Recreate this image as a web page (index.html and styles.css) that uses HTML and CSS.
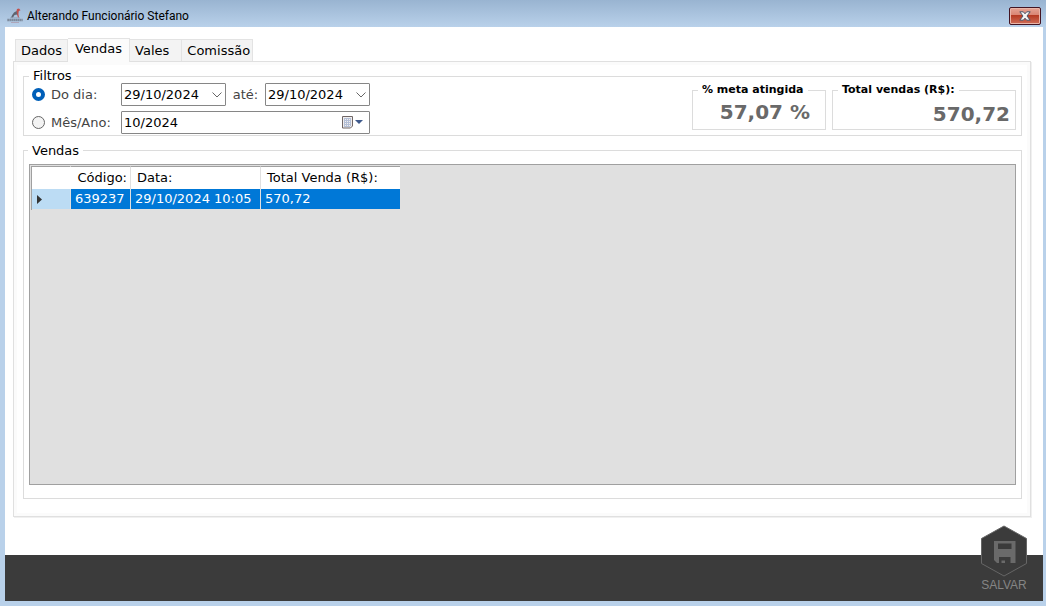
FILE: index.html
```
<!DOCTYPE html>
<html lang="pt-BR">
<head>
    <meta charset="UTF-8">
    <meta name="viewport" content="width=device-width, initial-scale=1.0">
    <title>Alterando Funcionário Stefano</title>
    <link rel="stylesheet" href="styles.css">
</head>
<body>
    <header class="titlebar">
        <svg class="app-icon" width="16" height="16" viewBox="0 0 16 16">
            <path d="M10 1 L12 0.5 L13.5 2.2 L11.8 3 L11.4 6 L12 9.5 H11 L10 6.5 L9.2 4 Z" fill="#c0504d"/>
            <path d="M9.6 3 L10.2 6.5 L7.5 7 L6 9.5 H4 L5.2 7 L7 4.5 Z" fill="#5f6470"/>
            <path d="M3 9.8 H13" stroke="#8a93a3" stroke-width="0.6"/>
            <path d="M0.5 12 H15.5" stroke="#68707e" stroke-width="2.4" stroke-dasharray="1.2 0.8"/>
            <path d="M4 14.5 H12" stroke="#a98c9a" stroke-width="0.6"/>
        </svg>
        <h1>Alterando Funcionário Stefano</h1>
        <button class="close" type="button" aria-label="Fechar">
            <svg width="12" height="10" viewBox="0 0 12 10">
                <path d="M0.8 0.8 H4.3 L6 2.8 L7.7 0.8 H11.2 L8 5 L11.2 9.2 H7.7 L6 7.2 L4.3 9.2 H0.8 L4 5 Z" fill="#f4f4f4" stroke="#4b5568" stroke-width="1"/>
            </svg>
        </button>
    </header>
    <main class="client">
        <nav class="tabs">
            <button type="button" class="tab">Dados</button>
            <button type="button" class="tab active">Vendas</button>
            <button type="button" class="tab vales">Vales</button>
            <button type="button" class="tab">Comissão</button>
        </nav>
        <div class="panel">
            <fieldset class="group filters">
                <legend>Filtros</legend>
                <div class="filters-body">
                    <div class="filter-grid">
                        <span class="choice">
                            <input type="radio" name="periodo" id="porDia" checked>
                            <label for="porDia">Do dia:</label>
                        </span>
                        <div class="dates">
                            <span class="picker">
                                <input type="text" id="dataInicio" aria-label="Data inicial" value="29/10/2024">
                                <svg width="10" height="6" viewBox="0 0 10 6"><path d="M0.5 0.5 L5 5 L9.5 0.5" fill="none" stroke="#666"/></svg>
                            </span>
                            <label for="dataFim">até:</label>
                            <span class="picker">
                                <input type="text" id="dataFim" value="29/10/2024">
                                <svg width="10" height="6" viewBox="0 0 10 6"><path d="M0.5 0.5 L5 5 L9.5 0.5" fill="none" stroke="#666"/></svg>
                            </span>
                        </div>
                        <span class="choice">
                            <input type="radio" name="periodo" id="porMes">
                            <label for="porMes">Mês/Ano:</label>
                        </span>
                        <span class="picker">
                            <input type="text" id="mesAno" aria-label="Mês/Ano" value="10/2024">
                            <svg width="21" height="13" viewBox="0 0 21 13">
                                <path d="M0.5 0.5 H10.5 V10 L8.5 12 H0.5 Z" fill="#f0eeee" stroke="#6f6666"/>
                                <path d="M2 2.5 H9 M2 4.5 H9 M2 6.5 H9 M2 8.5 H9 M2 10.5 H8" stroke="#b4bfd6"/>
                                <path d="M2 3.5 H9 M2 5.5 H9 M2 7.5 H9 M2 9.5 H9" stroke="#b4bfd6" stroke-dasharray="1 1"/>
                                <path d="M13 4 H21 L17 8 Z" fill="#3f5a8c"/>
                            </svg>
                        </span>
                    </div>
                    <div class="totals">
                        <fieldset class="group total goal">
                            <legend>% meta atingida</legend>
                            <output>57,07 %</output>
                        </fieldset>
                        <fieldset class="group total amount">
                            <legend>Total vendas (R$):</legend>
                            <output>570,72</output>
                        </fieldset>
                    </div>
                </div>
            </fieldset>
            <section class="group sales">
                <h2>Vendas</h2>
                <div class="grid-area">
                    <table>
                        <thead>
                            <tr>
                                <th class="marker"></th>
                                <th class="code">Código:</th>
                                <th class="date">Data:</th>
                                <th class="value">Total Venda (R$):</th>
                            </tr>
                        </thead>
                        <tbody>
                            <tr>
                                <td class="marker"><svg width="5" height="9" viewBox="0 0 5 9"><path d="M0 0 L5 4.5 L0 9 Z" fill="#333"/></svg></td>
                                <td class="code">639237</td>
                                <td>29/10/2024 10:05</td>
                                <td>570,72</td>
                            </tr>
                        </tbody>
                    </table>
                </div>
            </section>
        </div>
    </main>
    <footer class="bottombar">
        <button class="save" type="button">
            <svg width="48" height="52" viewBox="0 0 48 52">
                <path d="M24 1 L46.5 13.5 V38.5 L24 51 L1.5 38.5 V13.5 Z" fill="#3b3b3b" stroke="#666"/>
                <path fill-rule="evenodd" d="M14 16 H35.5 V38 H17 L14 35 Z M18 18.5 V24 H31.5 V18.5 Z M19 32 V38 H21.5 V35.5 H25 V38 H30.5 V32 Z" fill="#6a6a6a"/>
            </svg>
            <span>SALVAR</span>
        </button>
    </footer>
</body>
</html>
```
FILE: styles.css
```
* {
    box-sizing: border-box;
}
body {
    margin: 0;
    padding: 0 3px 5px 5px;
    min-height: 100vh;
    display: flex;
    flex-direction: column;
    font-family: "DejaVu Sans", Verdana, sans-serif;
    font-size: 13px;
    line-height: 16px;
    color: #000;
    background: #b9d1ea;
}
button, input {
    font: inherit;
    color: inherit;
}

/* title bar */
.titlebar {
    display: flex;
    align-items: center;
    gap: 4px;
    height: 27px;
    margin: 0 -3px 0 -5px;
    padding: 4px 5px 0 7px;
    background: linear-gradient(#99b4d1, #b9d1ea);
}
.titlebar h1 {
    flex: 1;
    margin: 0;
    font-family: Roboto, "Segoe UI", sans-serif;
    font-size: 12px;
    font-weight: normal;
}
.close {
    display: flex;
    align-items: center;
    justify-content: center;
    width: 32px;
    height: 18px;
    padding: 0;
    border: 1px solid #431422;
    border-radius: 2px;
    box-shadow: inset 0 0 0 1px #eab5a8;
    background: linear-gradient(#e5a394 0%, #d98472 45%, #b53a22 46%, #cf6d58 100%);
}

.client {
    flex: 1;
    display: flex;
    flex-direction: column;
    padding: 11px 12px 38px 8px;
    background: #fff;
}

/* tabs */
.tabs {
    display: flex;
    align-items: flex-end;
    height: 23px;
    padding-left: 2px;
}
.tab {
    height: 22px;
    padding: 0 6px;
    border: 1px solid #e3e3e3;
    border-width: 1px 1px 0 0;
    background: #f3f3f3;
    white-space: nowrap;
}
.tab:first-child {
    border-left-width: 1px;
    padding: 0 5px;
}
.tab.active {
    height: 24px;
    margin-bottom: -1px;
    padding: 0 7px 3px;
    background: #fbfbfb;
    z-index: 1;
}
.tab.vales {
    padding: 0 12px 0 5px;
}
.tab:last-child {
    padding: 0 2px 0 5px;
}

.panel {
    flex: 1;
    display: flex;
    flex-direction: column;
    gap: 14px;
    padding: 7px 8px 17px 9px;
    border: 1px solid #e0e0e0;
    box-shadow: inset 0 0 0 3px #fbfbfb, 1px 1px 0 #f0f0f0;
}
.group {
    margin: 0;
    min-width: 0;
    border: 1px solid #dcdcdc;
}
.group legend {
    padding: 0 4px;
    line-height: 14px;
}

/* filters */
.filters {
    padding: 0 5px 1px 8px;
}
.filters legend {
    margin-left: -3px;
}
.filters-body {
    display: flex;
    justify-content: space-between;
    align-items: flex-start;
    gap: 16px;
}
.filter-grid {
    display: grid;
    grid-template-columns: 89px 249px;
    gap: 5px 0;
}
.choice {
    display: flex;
    align-items: center;
    gap: 6px;
    color: #444;
    white-space: nowrap;
}
.choice input {
    appearance: none;
    flex: none;
    width: 13px;
    height: 13px;
    margin: 0;
    border: 1px solid #666;
    border-radius: 50%;
    background: #f3f3f3;
}
.choice input:checked {
    border: 4px solid #005fb8;
    background: #fff;
}
.dates {
    display: flex;
    align-items: center;
    justify-content: space-between;
    color: #444;
}
.picker {
    display: flex;
    align-items: center;
    height: 23px;
    padding: 0 6px 0 2px;
    border: 1px solid #868686;
    border-radius: 1px;
    background: #fff;
    color: #000;
}
.dates .picker {
    width: 105px;
    padding-right: 3px;
}
.picker input {
    flex: 1;
    min-width: 0;
    padding: 0;
    border: 0;
    outline: 0;
    background: none;
}
.picker svg {
    flex: none;
}

.totals {
    display: flex;
    gap: 6px;
}
.total {
    height: 47px;
    padding: 3px 5px 0;
}
.total legend {
    margin-left: 0;
    font-size: 11px;
    font-weight: bold;
}
.total output {
    display: block;
    color: #696969;
    font-size: 20px;
    line-height: 24px;
    font-weight: bold;
    text-align: right;
}
.goal {
    width: 134px;
    padding-right: 15px;
}
.amount {
    width: 184px;
    padding-top: 5px;
}

/* sales grid */
.sales {
    flex: 1;
    display: flex;
    flex-direction: column;
    align-items: stretch;
    padding: 0 5px 13px;
}
.sales h2 {
    align-self: flex-start;
    margin: -8px 0 6px -1px;
    padding: 0 4px;
    background: #fff;
    font-size: 13px;
    line-height: 15px;
    font-weight: normal;
}
.grid-area {
    flex: 1;
    padding: 1px;
    border: 1px solid #a0a0a0;
    background: #e0e0e0;
}
table {
    table-layout: fixed;
    width: 369px;
    border-collapse: separate;
    border-spacing: 0;
    border-left: 1px solid #a0a0a0;
}
th {
    height: 23px;
    padding: 0 3px 0 6px;
    border-top: 1px solid #a0a0a0;
    border-right: 1px solid #e0e0e0;
    background: #fff;
    font-weight: normal;
    text-align: left;
    white-space: nowrap;
}
td {
    height: 21px;
    padding: 0 4px;
    border-right: 1px solid #e0e0e0;
    border-bottom: 1px solid #e0e0e0;
    background: #0078d7;
    color: #fff;
    white-space: nowrap;
}
th:last-child, td:last-child {
    border-right: 0;
}
.marker {
    width: 39px;
}
th.marker {
    border-right-color: #fff;
}
td.marker {
    padding-left: 5px;
    background: #bcdcf4;
}
td.marker svg {
    display: block;
}
.code {
    width: 60px;
    text-align: right;
}
td.code {
    padding-right: 6px;
}
.date {
    width: 130px;
}

/* bottom bar */
.bottombar {
    position: relative;
    height: 46px;
    background: #3b3b3b;
}
.save {
    position: absolute;
    right: 15px;
    bottom: 8px;
    display: flex;
    flex-direction: column;
    align-items: center;
    padding: 0;
    border: 0;
    background: none;
    color: #858585;
    font-family: "Liberation Sans", Arial, sans-serif;
    font-size: 12px;
}
```
